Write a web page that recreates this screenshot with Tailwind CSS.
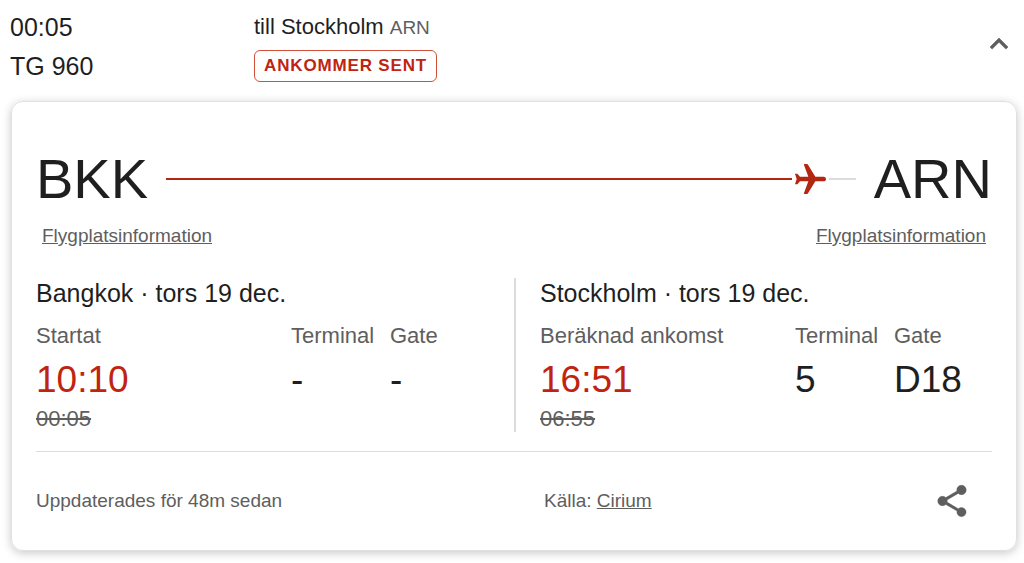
<!DOCTYPE html>
<html lang="sv">
<head>
    <meta charset="UTF-8">
    <meta name="viewport" content="width=device-width, initial-scale=1.0">
    <title>TG 960 till Stockholm</title>
    <script src="https://cdn.jsdelivr.net/npm/@tailwindcss/browser@4"></script>
</head>
<body class="bg-white text-[#1f1f1f] font-['Liberation_Sans',Arial,sans-serif]">
    <header class="flex items-start pt-2 pl-[10px] pr-[7px]">
        <div class="w-[244px] text-[25px] leading-[39px]">
            <p>00:05</p>
            <p>TG 960</p>
        </div>
        <div class="flex-1 pt-[5px]">
            <p class="text-[22px] leading-7">till Stockholm <span class="text-[19px] text-[#5e5e5e]">ARN</span></p>
            <p class="mt-2 flex h-8 w-fit items-center rounded-md border border-[#d0503c] px-[9px] text-[17px] font-bold tracking-wider text-[#c02410]">ANKOMMER SENT</p>
        </div>
        <button type="button" aria-label="Dölj" class="mt-[18px]">
            <svg class="size-9" viewBox="0 0 24 24" fill="#5e5e5e" stroke="#5e5e5e" stroke-width=".4"><path d="M12 8l-6 6 1.41 1.41L12 10.83l4.59 4.58L18 14z"/></svg>
        </button>
    </header>

    <main class="mt-[15px] mb-3 ml-[11px] mr-[7px] rounded-xl border border-[#e0e0e0] px-6 pt-[45px] shadow-[0_2px_10px_rgba(0,0,0,0.22)]">
        <!-- route -->
        <div class="flex items-center text-[56px] leading-[64px]">
            <span>BKK</span>
            <div class="mx-[18px] flex flex-1 items-center gap-[3px]">
                <div class="h-[2px] flex-1 bg-[#b3260f]"></div>
                <svg class="w-[31px] h-[30px]" viewBox="0 0 93 90" fill="#b3260f"><path d="M0 29h7l8 9h25L27 3q-1-3 2-3h7q2 0 3 2l22 36h24c6 0 8 3 8 7s-2 7-8 7H61L39 88q-1 2-3 2h-7q-3 0-2-3l13-35H15l-8 9H0l5-16z"/></svg>
                <div class="h-[2px] w-[27px] bg-[#dadce0]"></div>
            </div>
            <span>ARN</span>
        </div>
        <div class="mt-[13px] flex justify-between px-[6px] text-[19px] leading-6 text-[#5e5e5e]">
            <a href="#" class="underline">Flygplatsinformation</a>
            <a href="#" class="underline">Flygplatsinformation</a>
        </div>

        <!-- departure / arrival -->
        <div class="mt-[30px] grid grid-cols-2">
            <section>
                <h2 class="text-[25px] leading-[30px]">Bangkok · tors 19 dec.</h2>
                <table class="mt-[14px] w-full table-fixed text-left">
                    <thead>
                        <tr class="text-[22px] leading-7 text-[#5e5e5e]">
                            <th class="w-[255px] font-normal">Startat</th>
                            <th class="w-[99px] font-normal">Terminal</th>
                            <th class="font-normal">Gate</th>
                        </tr>
                    </thead>
                    <tbody>
                        <tr class="text-[37px] leading-[44px]">
                            <td class="pt-2 pb-1 text-[#c02410]">10:10</td>
                            <td class="pt-2 pb-1">-</td>
                            <td class="pt-2 pb-1">-</td>
                        </tr>
                        <tr class="text-[22px] leading-[26px] text-[#5e5e5e]">
                            <td colspan="3"><s>00:05</s></td>
                        </tr>
                    </tbody>
                </table>
            </section>
            <section class="border-l-2 border-[#dadce0] pl-6">
                <h2 class="text-[25px] leading-[30px]">Stockholm · tors 19 dec.</h2>
                <table class="mt-[14px] w-full table-fixed text-left">
                    <thead>
                        <tr class="text-[22px] leading-7 text-[#5e5e5e]">
                            <th class="w-[255px] font-normal">Beräknad ankomst</th>
                            <th class="w-[99px] font-normal">Terminal</th>
                            <th class="font-normal">Gate</th>
                        </tr>
                    </thead>
                    <tbody>
                        <tr class="text-[37px] leading-[44px]">
                            <td class="pt-2 pb-1 text-[#c02410]">16:51</td>
                            <td class="pt-2 pb-1">5</td>
                            <td class="pt-2 pb-1">D18</td>
                        </tr>
                        <tr class="text-[22px] leading-[26px] text-[#5e5e5e]">
                            <td colspan="3"><s>06:55</s></td>
                        </tr>
                    </tbody>
                </table>
            </section>
        </div>

        <footer class="mt-[19px] grid grid-cols-2 items-center border-t border-[#dadce0] py-[30px] text-[19px] leading-6 text-[#5e5e5e]">
            <p>Uppdaterades för 48m sedan</p>
            <div class="flex items-center justify-between pl-[30px] pr-[21px]">
                <p>Källa: <a href="#" class="underline">Cirium</a></p>
                <button type="button" aria-label="Dela">
                    <svg class="size-[38px]" viewBox="0 0 24 24" fill="#5e5e5e" stroke="#5e5e5e" stroke-width=".2"><path d="M18 16.08c-.76 0-1.44.3-1.96.77L8.91 12.7c.05-.23.09-.46.09-.7s-.04-.47-.09-.7l7.05-4.11c.54.5 1.25.81 2.04.81 1.66 0 3-1.34 3-3s-1.34-3-3-3-3 1.34-3 3c0 .24.04.47.09.7L8.04 9.81C7.5 9.31 6.79 9 6 9c-1.66 0-3 1.34-3 3s1.34 3 3 3c.79 0 1.5-.31 2.04-.81l7.12 4.16c-.05.21-.08.43-.08.65 0 1.61 1.31 2.92 2.92 2.92s2.92-1.31 2.92-2.92-1.31-2.92-2.92-2.92z"/></svg>
                </button>
            </div>
        </footer>
    </main>
</body>
</html>
